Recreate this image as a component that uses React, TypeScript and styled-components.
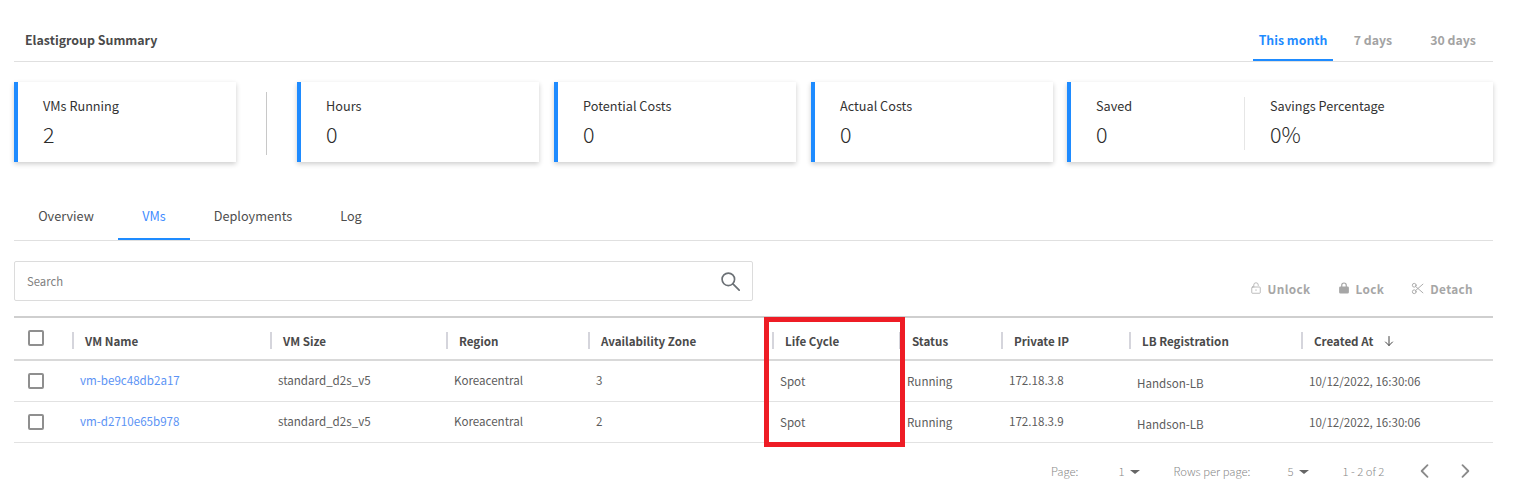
import React from "react";
import styled, { createGlobalStyle } from "styled-components";

const FONT = `"Noto Sans CJK JP", "Noto Sans", sans-serif`;

const Global = createGlobalStyle`
  html, body { margin: 0; padding: 0; background: #fff; }
  body { font-family: ${FONT}; color: #3f3f3f; }
  * { box-sizing: border-box; }
`;

const Page = styled.div`
  width: 1537px;
  height: 492px;
  overflow: hidden;
  padding: 20px 44px 0 14px;
`;

const SummaryHeader = styled.header`
  display: flex;
  justify-content: space-between;
  align-items: stretch;
  height: 42px;
  border-bottom: 1px solid #e0e0e0;
`;

const Title = styled.h2`
  margin: 0;
  padding: 0 0 0 11px;
  font-size: 12.4px;
  font-weight: 700;
  line-height: 41px;
  color: #4a4a4a;
`;

const Ranges = styled.nav`
  display: flex;
`;

const Range = styled.div<{ $active?: boolean }>`
  width: 80px;
  height: 41px;
  text-align: center;
  font-size: 12.3px;
  font-weight: 700;
  line-height: 41px;
  color: ${(p) => (p.$active ? "#1e8bff" : "#a3a3a3")};
  border-bottom: 2px solid ${(p) => (p.$active ? "#1e8bff" : "transparent")};
`;

const Cards = styled.section`
  display: flex;
  margin-top: 20px;
  height: 80px;
`;

const Card = styled.div<{ $w: number; $gap?: number }>`
  display: flex;
  width: ${(p) => p.$w}px;
  margin-right: ${(p) => p.$gap ?? 0}px;
  height: 80px;
  background: #fff;
  border-left: 4px solid #1e8bff;
  box-shadow: 0 2px 5px rgba(0, 0, 0, 0.2);
`;

const Divider = styled.div`
  width: 1px;
  height: 63px;
  margin: 10px 30px 0 30px;
  background: #c8c8c8;
`;

const Metric = styled.div<{ $w?: number; $rule?: boolean }>`
  width: ${(p) => (p.$w ? `${p.$w}px` : "auto")};
  padding-top: 14px;
  padding-left: ${(p) => (p.$rule ? 26 : 25)}px;
  position: relative;
  ${(p) =>
    p.$rule
      ? `&::before {
          content: "";
          position: absolute;
          left: 0;
          top: 15px;
          width: 1px;
          height: 53px;
          background: #e6e6e6;
        }`
      : ""}
`;

const MetricLabel = styled.div`
  font-size: 12.7px;
  line-height: 20px;
  color: #333;
`;

const MetricValue = styled.div`
  font-size: 21.5px;
  font-weight: 300;
  line-height: 36px;
  color: #2b2b2b;
`;

const Tabs = styled.nav`
  display: flex;
  margin-top: 32px;
  height: 47px;
  border-bottom: 1px solid #e0e0e0;
`;

const Tab = styled.div<{ $active?: boolean; $w: number }>`
  width: ${(p) => p.$w}px;
  height: 46px;
  text-align: center;
  font-size: 12.7px;
  line-height: 43px;
  color: ${(p) => (p.$active ? "#3f8cff" : "#4d4d4d")};
  border-bottom: 2px solid ${(p) => (p.$active ? "#1e8bff" : "transparent")};
`;

const Toolbar = styled.div`
  display: flex;
  justify-content: space-between;
  margin-top: 20px;
  height: 55px;
`;

const SearchBox = styled.div`
  display: flex;
  align-items: center;
  justify-content: space-between;
  width: 739px;
  height: 40px;
  padding: 0 12px;
  border: 1px solid #dcdcdc;
  border-radius: 2px;
  font-size: 11.3px;
  color: #808080;
`;

const Actions = styled.div`
  display: flex;
  align-items: center;
  height: 56px;
  padding-bottom: 2px;
  padding-right: 20px;
  gap: 27px;
`;

const Action = styled.div`
  display: flex;
  align-items: center;
  gap: 6px;
  font-size: 11.8px;
  font-weight: 700;
  color: #a6a6a6;
  letter-spacing: 0.35px;
`;

const TableWrap = styled.div`
  position: relative;
`;

const TEMPLATE = "58px 198px 176px 142px 184px 127px 102px 128px 172px 192px";

const HeadRow = styled.div`
  display: grid;
  grid-template-columns: ${TEMPLATE};
  height: 45px;
  border-top: 2px solid #cfcfcf;
  border-bottom: 2px solid #d9d9d9;
  align-items: center;
`;

const Row = styled.div`
  display: grid;
  grid-template-columns: ${TEMPLATE};
  height: 41px;
  border-bottom: 1px solid #e2e2e2;
  align-items: center;
`;

const CheckCell = styled.div<{ $head?: boolean }>`
  padding-left: 14px;
  display: flex;
  align-items: center;
  margin-top: -1px;
`;

const Box = styled.span`
  display: block;
  width: 16px;
  height: 16px;
  border: 2px solid #8f8f8f;
  border-radius: 2px;
  background: #fff;
`;

const HeadCell = styled.div`
  display: flex;
  align-items: center;
  gap: 10px;
  height: 17px;
  margin-top: 4px;
  padding-left: 11px;
  border-left: 2px solid #d5d5dc;
  font-size: 11.6px;
  font-weight: 700;
  color: #4a4a4a;
  white-space: nowrap;
`;

const Cell = styled.div<{ $dy?: number; $link?: boolean }>`
  padding-left: 8px;
  font-size: 11.6px;
  line-height: 18px;
  position: relative;
  top: ${(p) => p.$dy ?? 0}px;
  color: ${(p) => (p.$link ? "#5b93f5" : "#5c5c5c")};
  white-space: nowrap;
`;

const Highlight = styled.div`
  position: absolute;
  left: 750px;
  top: 1px;
  width: 141px;
  height: 130px;
  border: 5px solid #ee1c25;
  pointer-events: none;
`;

const Pager = styled.footer`
  display: flex;
  align-items: center;
  height: 56px;
  font-size: 11.3px;
  font-weight: 300;
  color: #8a8a8a;
`;

const PagerText = styled.span<{ $left: number }>`
  margin-left: ${(p) => p.$left}px;
  white-space: nowrap;
`;

const Caret = styled.span`
  display: inline-block;
  width: 0;
  height: 0;
  margin-left: 6px;
  border-left: 5.5px solid transparent;
  border-right: 5.5px solid transparent;
  border-top: 4px solid #666;
  vertical-align: 2px;
`;

const PageBtn = styled.span<{ $left: number }>`
  display: flex;
  margin-left: ${(p) => p.$left}px;
`;

const rows = [
  ["vm-be9c48db2a17", "3", "172.18.3.8"],
  ["vm-d2710e65b978", "2", "172.18.3.9"],
];

const heads = [
  "VM Name",
  "VM Size",
  "Region",
  "Availability Zone",
  "Life Cycle",
  "Status",
  "Private IP",
  "LB Registration",
];

const Stroke = ({ size, children, sw = 1.5, color = "currentColor" }: { size: number; children: React.ReactNode; sw?: number; color?: string }) => (
  <svg width={size} height={size} viewBox="0 0 24 24" fill="none" stroke={color} strokeWidth={sw} strokeLinecap="round" strokeLinejoin="round">
    {children}
  </svg>
);

export default function App() {
  return (
    <Page>
      <Global />
      <SummaryHeader>
        <Title>Elastigroup Summary</Title>
        <Ranges>
          <Range $active>This month</Range>
          <Range>7 days</Range>
          <Range>30 days</Range>
        </Ranges>
      </SummaryHeader>
      <Cards>
        <Card $w={222}>
          <Metric>
            <MetricLabel>VMs Running</MetricLabel>
            <MetricValue>2</MetricValue>
          </Metric>
        </Card>
        <Divider />
        <Card $w={242} $gap={15}>
          <Metric>
            <MetricLabel>Hours</MetricLabel>
            <MetricValue>0</MetricValue>
          </Metric>
        </Card>
        <Card $w={242} $gap={15}>
          <Metric>
            <MetricLabel>Potential Costs</MetricLabel>
            <MetricValue>0</MetricValue>
          </Metric>
        </Card>
        <Card $w={242} $gap={14}>
          <Metric>
            <MetricLabel>Actual Costs</MetricLabel>
            <MetricValue>0</MetricValue>
          </Metric>
        </Card>
        <Card $w={426}>
          <Metric $w={173}>
            <MetricLabel>Saved</MetricLabel>
            <MetricValue>0</MetricValue>
          </Metric>
          <Metric $rule>
            <MetricLabel>Savings Percentage</MetricLabel>
            <MetricValue>0%</MetricValue>
          </Metric>
        </Card>
      </Cards>
      <Tabs>
        <Tab $w={104}>Overview</Tab>
        <Tab $active $w={72}>VMs</Tab>
        <Tab $w={126}>Deployments</Tab>
        <Tab $w={70}>Log</Tab>
      </Tabs>
      <Toolbar>
        <SearchBox>
          <span>Search</span>
          <Stroke size={20} sw={2} color="#6b7075">
            <circle cx="10" cy="10" r="7.5" />
            <path d="M15.5 15.5 23 23" />
          </Stroke>
        </SearchBox>
        <Actions>
          <Action>
            <Stroke size={12}>
              <rect x="3.5" y="10" width="17" height="12.5" rx="1.5" />
              <path d="M7.5 10V6a4.5 4.5 0 0 1 9 0v1" />
              <path d="M12 15.5v1.5" />
            </Stroke>
            Unlock
          </Action>
          <Action>
            <Stroke size={12} sw={2.4}>
              <path d="M7.5 10V6.5a4.5 4.5 0 0 1 9 0V10" />
              <rect x="3.5" y="10" width="17" height="12" rx="1.5" fill="currentColor" />
            </Stroke>
            Lock
          </Action>
          <Action>
            <Stroke size={13} sw={1.7}>
              <circle cx="6" cy="6" r="3.5" />
              <circle cx="6" cy="18" r="3.5" />
              <path d="M8.6 8.4 22 20M8.6 15.6 22 4" />
            </Stroke>
            Detach
          </Action>
        </Actions>
      </Toolbar>
      <TableWrap>
        <HeadRow>
          <CheckCell $head><Box /></CheckCell>
          {heads.map((h) => (
            <HeadCell key={h}>{h}</HeadCell>
          ))}
          <HeadCell>
            Created At
            <Stroke size={12} sw={2} color="#444">
              <path d="M12 3v18M5 14l7 7 7-7" />
            </Stroke>
          </HeadCell>
        </HeadRow>
        {rows.map(([name, zone, ip]) => (
          <Row key={name}>
            <CheckCell><Box /></CheckCell>
            <Cell $link $dy={-1}>{name}</Cell>
            <Cell $dy={-1}>standard_d2s_v5</Cell>
            <Cell $dy={-1}>Koreacentral</Cell>
            <Cell $dy={-1}>{zone}</Cell>
            <Cell>Spot</Cell>
            <Cell>Running</Cell>
            <Cell $dy={-1}>{ip}</Cell>
            <Cell $dy={2}>Handson-LB</Cell>
            <Cell>10/12/2022, 16:30:06</Cell>
          </Row>
        ))}
        <Highlight />
      </TableWrap>
      <Pager>
        <PagerText $left={1037}>Page:</PagerText>
        <PagerText $left={40}>1<Caret /></PagerText>
        <PagerText $left={33}>Rows per page:</PagerText>
        <PagerText $left={37}>5<Caret /></PagerText>
        <PagerText $left={33}>1 - 2 of 2</PagerText>
        <PageBtn $left={31}>
          <Stroke size={20} sw={2.2} color="#8a8a8a"><path d="M15 5l-7 7 7 7" /></Stroke>
        </PageBtn>
        <PageBtn $left={20}>
          <Stroke size={20} sw={2.2} color="#8a8a8a"><path d="M9 5l7 7-7 7" /></Stroke>
        </PageBtn>
      </Pager>
    </Page>
  );
}
